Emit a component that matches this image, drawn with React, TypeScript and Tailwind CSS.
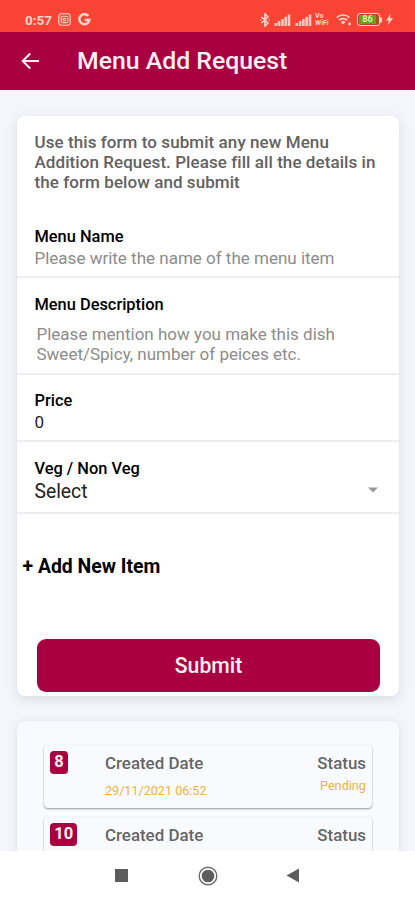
import React from 'react';

interface FieldProps {
  label: string;
  className?: string;
  children: React.ReactNode;
}

interface RequestItem {
  id: number;
  date?: string;
  status?: string;
}

const requests: RequestItem[] = [
  { id: 8, date: '29/11/2021 06:52', status: 'Pending' },
  { id: 10 },
];

const Signal = () => (
  <svg width="17" height="12" viewBox="0 0 17 12" fill="#fbc9c0">
    <rect x="0.5" y="9" width="2.6" height="3" />
    <rect x="3.8" y="7" width="2.6" height="5" />
    <rect x="7.1" y="5" width="2.6" height="7" />
    <rect x="10.4" y="2.8" width="2.6" height="9.2" />
    <rect x="13.7" y="0.5" width="2.6" height="11.5" />
  </svg>
);

const StatusBar = () => (
  <div className="flex h-8 shrink-0 items-center bg-[#f94435] pt-[7px] pl-[25px] text-[#fdd5cd]">
    <span className="w-[33px] text-[13.5px] leading-4 font-bold whitespace-nowrap">0:57</span>
    <svg width="13" height="13" viewBox="0 0 13 13" fill="none" stroke="currentColor" strokeWidth="1.1">
      <rect x="0.8" y="0.8" width="11.4" height="11.4" rx="2.6" />
      <rect x="3.2" y="3.2" width="6.6" height="6.6" rx="1.6" />
      <circle cx="6.3" cy="6.7" r="1.3" />
    </svg>
    <svg className="ml-[7px]" width="13" height="13" viewBox="0 0 13 13" fill="none" stroke="currentColor" strokeWidth="2.5">
      <path d="M10.3 3A5 5 0 1 0 11.4 6.9H6.7" />
    </svg>

    <svg className="ml-[169px]" width="10" height="14" viewBox="0 0 10 14" fill="none" stroke="currentColor" strokeWidth="1.6">
      <path d="M1.5 4l6.5 6L4.9 13V1L8 4l-6.5 6" />
      <path d="M0.4 7h1M8.6 7h1" />
    </svg>
    <span className="ml-[4px]"><Signal /></span>
    <span className="ml-[4px]"><Signal /></span>
    <span className="ml-[3px] w-[15px] text-[7px] leading-[6.5px] font-bold">
      <span className="block">Vo</span>
      <span className="block">WiFi</span>
    </span>
    <svg className="ml-[6px]" width="16" height="13" viewBox="0 0 16 13" fill="none" stroke="currentColor" strokeWidth="1.6">
      <path d="M0.8 4.6a9 9 0 0 1 12.6 0M3 7.2a6 6 0 0 1 8.2 0" />
      <path d="M4.8 9a3.4 3.4 0 0 1 4.6 0L7.1 11.6z" fill="currentColor" stroke="none" />
      <circle cx="13.6" cy="11" r="1.4" fill="currentColor" stroke="none" />
    </svg>
    <span className="ml-[5px] flex items-center">
      <span className="flex h-[13px] w-[23px] rounded-[3px] border-[1.5px] border-[#fdd5cd] bg-[#b04a22] p-px">
        <span className="flex h-[9px] w-[17px] items-center justify-center bg-[#6aa31f] text-[9px] leading-none font-bold text-[#d6f0a4]">
          86
        </span>
      </span>
      <span className="h-[6px] w-[2px] rounded-r-sm bg-[#fdd5cd]" />
    </span>
    <svg className="ml-[3px]" width="9" height="11" viewBox="0 0 8 11" fill="currentColor">
      <path d="M5.2 0L0.4 6.4h2.9L2.4 11 7.6 4.3H4.6z" />
    </svg>
  </div>
);

const Header = () => (
  <header className="flex h-[58px] shrink-0 items-center bg-[#a90042] pl-[21px] text-[#fff0f4]">
    <svg width="19" height="18" viewBox="0 0 19 18" fill="none" stroke="currentColor" strokeWidth="2">
      <path d="M18 9H2M9.2 1.5L1.7 9l7.5 7.5" />
    </svg>
    <h1 className="ml-[37px] text-[24.8px] leading-8 font-medium whitespace-nowrap">Menu Add Request</h1>
  </header>
);

const Field: React.FC<FieldProps> = ({ label, className = '', children }) => (
  <div className={`border-b-2 border-[#ededed] pl-[17.5px] ${className}`}>
    <div className="text-[16.4px] leading-[22px] font-medium text-black">{label}</div>
    {children}
  </div>
);

const RequestForm = () => (
  <section className="flex h-[580px] shrink-0 flex-col rounded-lg bg-white pt-[16px] shadow-[0_3px_12px_rgba(60,60,90,0.14)]">
    <p className="pl-[17.5px] text-[17px] leading-5 font-medium tracking-[0.07px] whitespace-nowrap text-[#626262]">
      Use this form to submit any new Menu
      <br />
      Addition Request. Please fill all the details in
      <br />
      the form below and submit
    </p>
    <Field label="Menu Name" className="mt-[34px] pb-[8px]">
      <div className="text-[17px] leading-5 text-[#8c8c8c]">Please write the name of the menu item</div>
    </Field>
    <Field label="Menu Description" className="pt-[16px] pb-[9px]">
      <div className="mt-[8px] pl-[2px] text-[17px] leading-5 text-[#8c8c8c]">
        Please mention how you make this dish
        <br />
        Sweet/Spicy, number of peices etc.
      </div>
    </Field>
    <Field label="Price" className="pt-[15px] pb-[8px]">
      <div className="text-[17px] leading-5 text-[#222222]">0</div>
    </Field>
    <Field label="Veg / Non Veg" className="pt-[16px] pb-[8px]">
      <div className="flex items-center justify-between pr-[21px] text-[19.3px] leading-6 text-[#222222]">
        Select
        <svg className="-mt-1" width="10" height="6" viewBox="0 0 10 6" fill="#999999">
          <path d="M0 0.5h10L5 5.5z" />
        </svg>
      </div>
    </Field>
    <button className="mt-[41px] pl-[5.5px] text-left text-[19.4px] leading-6 font-bold text-black">+ Add New Item</button>
    <button className="mr-[19px] mb-[4px] ml-[20px] mt-auto h-[53px] rounded-[9px] bg-[#a90042] text-[21.2px] font-medium text-[#fff0f4]">
      Submit
    </button>
  </section>
);

const RequestCard: React.FC<{ item: RequestItem }> = ({ item }) => (
  <div className="flex h-[63px] shrink-0 rounded-[4px] bg-[#f9fafe] pt-[5px] pr-[6px] pl-[6px] shadow-[0_1px_2px_rgba(0,0,0,0.4)]">
    <div className="w-[55px]">
      <span className="inline-block h-[23px] rounded-[4px] bg-[#a90042] px-[4.2px] text-[16.5px] leading-[22px] font-bold text-[#fff0f4]">
        {item.id}
      </span>
    </div>
    <div className="flex-1">
      <div className="pt-[3px] text-[16.9px] leading-5 font-medium text-[#666666]">Created Date</div>
      {item.date && <div className="mt-[10px] text-[12.6px] leading-4 text-[#eeb23d]">{item.date}</div>}
    </div>
    <div className="text-right">
      <div className="pt-[3px] text-[16.9px] leading-5 font-medium text-[#666666]">Status</div>
      {item.status && <div className="mt-[5px] text-[12.7px] leading-4 text-[#eeb23d]">{item.status}</div>}
    </div>
  </div>
);

const NavBar = () => (
  <nav className="flex h-[49px] shrink-0 items-center bg-white pl-[115px]">
    <span className="size-[13px] bg-[#5d5d5d]" />
    <svg className="ml-[70px]" width="20" height="20" viewBox="0 0 20 20">
      <circle cx="10" cy="10" r="8.8" fill="none" stroke="#6a6a6a" strokeWidth="1.4" />
      <circle cx="10" cy="10" r="6.3" fill="#5d5d5d" />
    </svg>
    <svg className="ml-[68px]" width="13" height="15" viewBox="0 0 13 15" fill="#5d5d5d">
      <path d="M13 0.5v14L0.5 7.5z" />
    </svg>
  </nav>
);

export default function App() {
  return (
    <div className="flex h-[900px] w-[415px] flex-col overflow-hidden bg-[#f4f6fb] font-[Roboto,sans-serif]">
      <StatusBar />
      <Header />
      <main className="flex min-h-0 flex-1 flex-col gap-[25px] overflow-hidden pt-[26px] pr-[16px] pl-[17px]">
        <RequestForm />
        <section className="flex shrink-0 flex-col gap-[9px] rounded-lg bg-[#f9fafe] px-[27px] pt-[24px] pb-6 shadow-[0_1px_9px_rgba(60,60,90,0.13)]">
          {requests.map((item) => (
            <RequestCard key={item.id} item={item} />
          ))}
        </section>
      </main>
      <NavBar />
    </div>
  );
}
